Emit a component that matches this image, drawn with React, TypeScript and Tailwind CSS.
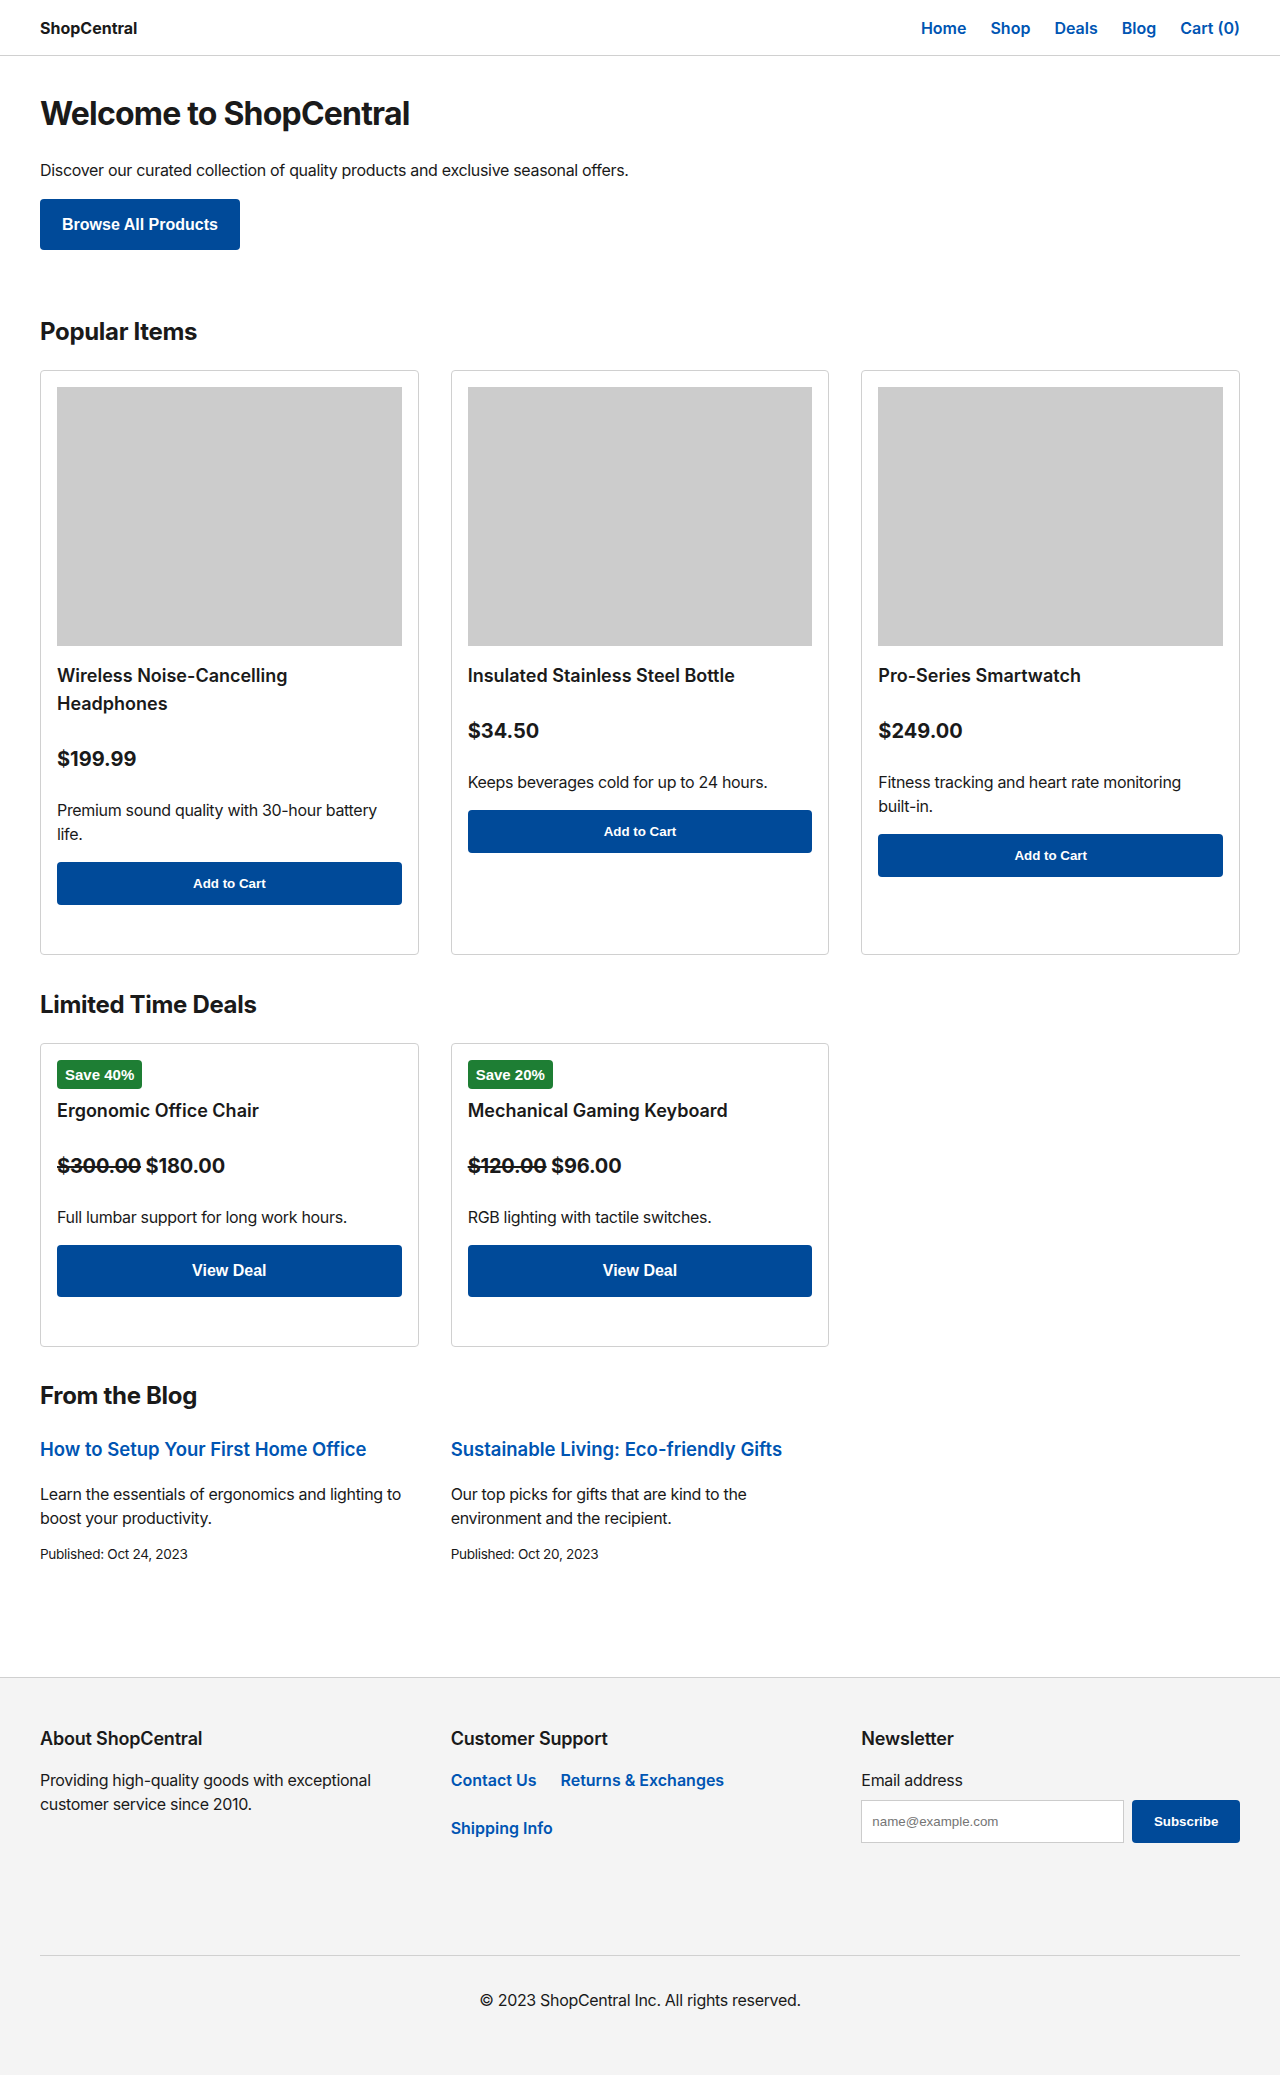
import React from "react";

const NAV = ["Home", "Shop", "Deals", "Blog", "Cart (0)"];

const PRODUCTS = [
  {
    name: "Wireless Noise-Cancelling Headphones",
    price: "$199.99",
    desc: "Premium sound quality with 30-hour battery life.",
  },
  {
    name: "Insulated Stainless Steel Bottle",
    price: "$34.50",
    desc: "Keeps beverages cold for up to 24 hours.",
  },
  {
    name: "Pro-Series Smartwatch",
    price: "$249.00",
    desc: "Fitness tracking and heart rate monitoring",
    tail: "built-in.",
  },
];

const DEALS = [
  {
    badge: "Save 40%",
    name: "Ergonomic Office Chair",
    was: "$300.00",
    now: "$180.00",
    desc: "Full lumbar support for long work hours.",
  },
  {
    badge: "Save 20%",
    name: "Mechanical Gaming Keyboard",
    was: "$120.00",
    now: "$96.00",
    desc: "RGB lighting with tactile switches.",
  },
];

const POSTS = [
  {
    title: "How to Setup Your First Home Office",
    desc: "Learn the essentials of ergonomics and lighting to boost your productivity.",
    date: "Published: Oct 24, 2023",
  },
  {
    title: "Sustainable Living: Eco-friendly Gifts",
    desc: "Our top picks for gifts that are kind to the environment and the recipient.",
    date: "Published: Oct 20, 2023",
  },
];

// buttons, badge and input keep the browser's default form font (Arial-like)
const btnFont = "font-['Liberation_Sans',Arial,sans-serif] tracking-normal";

export default function App() {
  return (
    <div className="bg-white text-[#1a1a1a] font-['Inter','Liberation_Sans',sans-serif] text-base leading-6 tracking-[-0.02em]">
      {/* header */}
      <header className="h-14 px-10 flex items-center justify-between border-b border-[#d0d0d0]">
        <span className="font-bold tracking-normal">ShopCentral</span>
        <nav className="flex gap-6 tracking-normal">
          {NAV.map((n) => (
            <a key={n} href="#" className="font-semibold text-[#0055b3]">
              {n}
            </a>
          ))}
        </nav>
      </header>

      <main className="px-10">
        {/* hero */}
        <section className="pt-[38px]">
          <h1 className="text-[32px] leading-10 font-bold tracking-[-0.025em]">Welcome to ShopCentral</h1>
          <p className="mt-6">Discover our curated collection of quality products and exclusive seasonal offers.</p>
          <button
            className={`${btnFont} mt-[17px] h-[51px] px-[22px] rounded bg-[#004a99] text-white text-base font-bold`}
          >
            Browse All Products
          </button>
        </section>

        {/* popular */}
        <section className="mt-[66px]">
          <h2 className="text-2xl leading-8 font-bold mb-[22px]">Popular Items</h2>
          <div className="grid grid-cols-3 gap-8">
            {PRODUCTS.map((p) => (
              <div key={p.name} className="border border-[#d0d0d0] rounded p-4 pb-[49px]">
                <div className="h-[259px] bg-[#cccccc]" />
                <h3 className="mt-4 text-lg leading-7 font-semibold tracking-normal">{p.name}</h3>
                <p className="mt-[26px] text-xl leading-[30px] font-bold tracking-normal">{p.price}</p>
                <p className="mt-6">
                  {p.desc}
                  {p.tail && (
                    <>
                      {" "}
                      <span className="whitespace-nowrap">{p.tail}</span>
                    </>
                  )}
                </p>
                <button
                  className={`${btnFont} mt-4 w-full h-[43px] rounded bg-[#004a99] text-white text-[13.33px] font-bold`}
                >
                  Add to Cart
                </button>
              </div>
            ))}
          </div>
        </section>

        {/* deals */}
        <section className="mt-[34px]">
          <h2 className="text-2xl leading-8 font-bold mb-[22px]">Limited Time Deals</h2>
          <div className="grid grid-cols-3 gap-8">
            {DEALS.map((d) => (
              <div key={d.name} className="border border-[#d0d0d0] rounded p-4 pb-[49px]">
                <span
                  className={`${btnFont} inline-block px-2 py-[6px] leading-[17px] text-[15px] font-bold text-white bg-[#1e7e34] rounded`}
                >
                  {d.badge}
                </span>
                <h3 className="mt-[8px] text-lg leading-7 font-semibold tracking-normal">{d.name}</h3>
                <p className="mt-[26px] text-xl leading-[30px] font-bold tracking-[-0.01em]">
                  <s>{d.was}</s> {d.now}
                </p>
                <p className="mt-6">{d.desc}</p>
                <button
                  className={`${btnFont} mt-4 w-full h-[52px] rounded bg-[#004a99] text-white text-base font-bold`}
                >
                  View Deal
                </button>
              </div>
            ))}
          </div>
        </section>

        {/* blog */}
        <section className="mt-[33px] pb-[113px]">
          <h2 className="text-2xl leading-8 font-bold">From the Blog</h2>
          <div className="grid grid-cols-3 gap-8 mt-[23px]">
            {POSTS.map((b) => (
              <article key={b.title}>
                <a href="#" className="block text-[18.5px] leading-7 font-semibold tracking-normal text-[#0055b3]">
                  {b.title}
                </a>
                <p className="mt-[19px]">{b.desc}</p>
                <p className="mt-[14px] text-[13.6px] leading-5">{b.date}</p>
              </article>
            ))}
          </div>
        </section>
      </main>

      {/* footer */}
      <footer className="bg-[#f4f4f4] border-t border-[#d0d0d0] px-10 pt-[47px] pb-[63px]">
        <div className="grid grid-cols-3 gap-8">
          <div>
            <h4 className="text-lg leading-7 font-semibold tracking-[-0.01em]">About ShopCentral</h4>
            <p className="mt-[15px]">Providing high-quality goods with exceptional customer service since 2010.</p>
          </div>
          <div>
            <h4 className="text-lg leading-7 font-semibold tracking-[-0.01em]">Customer Support</h4>
            <div className="mt-[15px] flex flex-wrap gap-6 tracking-normal">
              {["Contact Us", "Returns & Exchanges", "Shipping Info"].map((l) => (
                <a key={l} href="#" className="font-semibold text-[#0055b3]">
                  {l}
                </a>
              ))}
            </div>
          </div>
          <div>
            <h4 className="text-lg leading-7 font-semibold tracking-[-0.01em]">Newsletter</h4>
            <label className="block mt-[15px]">Email address</label>
            <div className="mt-2 flex gap-2">
              <input
                placeholder="name@example.com"
                className={`${btnFont} w-[263px] h-[43px] px-[10px] bg-white border border-[#cccccc] text-[13.33px] placeholder:text-[#757575] outline-none`}
              />
              <button
                className={`${btnFont} flex-1 h-[43px] rounded bg-[#004a99] text-white text-[13.33px] font-bold`}
              >
                Subscribe
              </button>
            </div>
          </div>
        </div>
        <div className="mt-[112px] border-t border-[#d0d0d0] pt-[32px] text-center">
          © 2023 ShopCentral Inc. All rights reserved.
        </div>
      </footer>
    </div>
  );
}
